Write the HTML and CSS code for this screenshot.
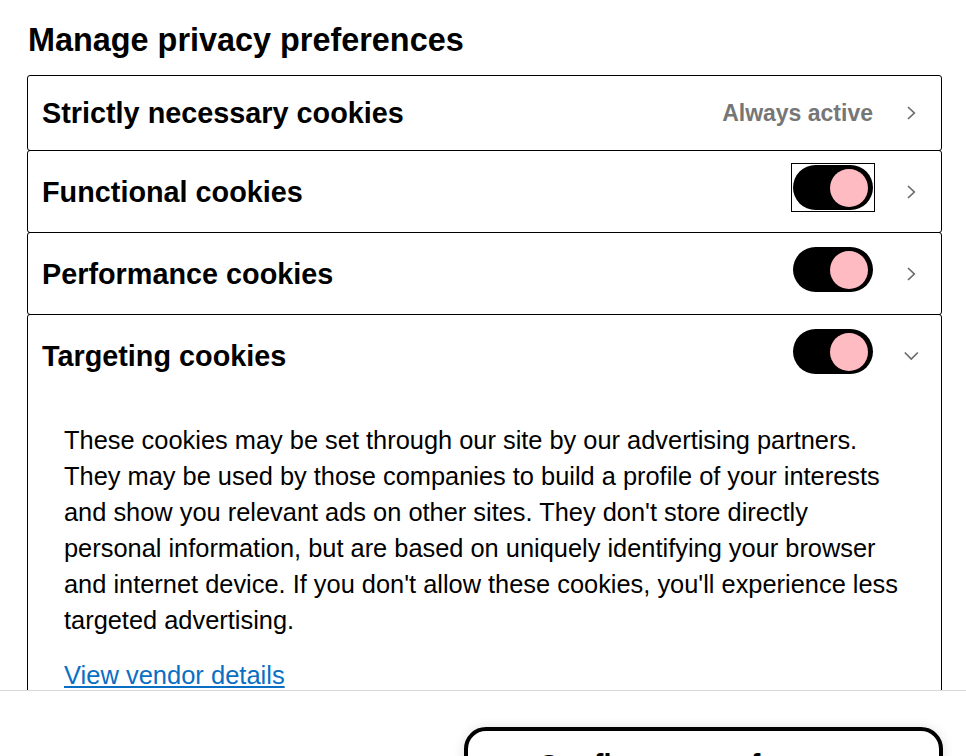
FILE: index.html
```html
<!DOCTYPE html>
<html lang="en">
<head>
<meta charset="utf-8">
<title>Manage privacy preferences</title>
<link rel="stylesheet" href="styles.css">
</head>
<body>
<div class="panel">
  <div class="scroll">
    <h1 class="title">Manage privacy preferences</h1>
    <div class="list">
      <div class="row">
        <div class="row-head static">
          <span class="row-title">Strictly necessary cookies</span>
          <span class="always">Always active</span>
          <span class="chev"><svg width="16" height="16" viewBox="0 0 16 16"><path d="M5 2 L11.3 8 L5 14" fill="none" stroke="#6b6b6b" stroke-width="1.7"/></svg></span>
        </div>
      </div>
      <div class="row">
        <div class="row-head">
          <span class="row-title">Functional cookies</span>
          <span class="switch focused"><span class="track"><span class="knob"></span></span></span>
          <span class="chev"><svg width="16" height="16" viewBox="0 0 16 16"><path d="M5 2 L11.3 8 L5 14" fill="none" stroke="#6b6b6b" stroke-width="1.7"/></svg></span>
        </div>
      </div>
      <div class="row">
        <div class="row-head">
          <span class="row-title">Performance cookies</span>
          <span class="switch"><span class="track"><span class="knob"></span></span></span>
          <span class="chev"><svg width="16" height="16" viewBox="0 0 16 16"><path d="M5 2 L11.3 8 L5 14" fill="none" stroke="#6b6b6b" stroke-width="1.7"/></svg></span>
        </div>
      </div>
      <div class="row open">
        <div class="row-head">
          <span class="row-title">Targeting cookies</span>
          <span class="switch"><span class="track"><span class="knob"></span></span></span>
          <span class="chev"><svg width="16" height="16" viewBox="0 0 16 16"><path d="M1.8 4.5 L8.3 11 L14.8 4.5" fill="none" stroke="#6b6b6b" stroke-width="1.7"/></svg></span>
        </div>
        <div class="row-body">
          <p class="desc">These cookies may be set through our site by our advertising partners. They may be used by those companies to build a profile of your interests and show you relevant ads on other sites. They don't store directly personal information, but are based on uniquely identifying your browser and internet device. If you don't allow these cookies, you'll experience less targeted advertising.</p>
          <a class="vendor-link" href="#">View vendor details</a>
          <div class="spacer"></div>
        </div>
      </div>
    </div>
  </div>
  <div class="footer">
    <button class="confirm" type="button">Confirm my preferences</button>
  </div>
</div>
</body>
</html>
```

FILE: styles.css
```css
html, body {
  margin: 0;
  padding: 0;
  background: #ffffff;
}

body {
  font-family: "Liberation Sans", Arial, Helvetica, sans-serif;
  color: #000000;
  overflow: hidden;
}

.panel {
  width: 966px;
  height: 756px;
  display: flex;
  flex-direction: column;
}

.scroll {
  height: 690px;
  flex: none;
  overflow: hidden;
  padding: 0 24px 0 27px;
  box-sizing: border-box;
}

.title {
  margin: 20px 0 15px 1px;
  font-size: 32.4px;
  line-height: 40px;
  font-weight: 700;
}

.list {
  display: flex;
  flex-direction: column;
}

.row {
  border: 1px solid #000000;
  border-radius: 3px;
}

.row + .row {
  margin-top: -1px;
}

.row-head {
  display: flex;
  align-items: center;
  height: 81px;
  padding: 0 14px;
}

.row-head.static {
  height: 74px;
}

.row-title {
  flex: 1;
  font-size: 28.8px;
  font-weight: 700;
  line-height: 36px;
}

.always {
  font-size: 23px;
  font-weight: 700;
  color: #767676;
  margin-right: 1px;
}

.chev {
  width: 32px;
  margin-left: 21px;
  display: flex;
  justify-content: center;
  align-items: center;
}

.chev svg {
  display: block;
}

.switch {
  display: block;
  padding: 1px;
  margin-bottom: 8px;
}

.switch.focused {
  outline: 1px solid #000000;
}

.track {
  display: block;
  position: relative;
  width: 80px;
  height: 45px;
  border-radius: 23px;
  background: #000000;
}

.knob {
  position: absolute;
  top: 4px;
  right: 5px;
  width: 38px;
  height: 38px;
  border-radius: 50%;
  background: #ffbbc2;
}

.row-body {
  padding: 26px 30px 0 36px;
}

.desc {
  margin: 0 0 19px 0;
  font-size: 25.4px;
  line-height: 36px;
}

.vendor-link {
  font-size: 25.5px;
  line-height: 36px;
  color: #0a6fc2;
  text-decoration: underline;
}

.spacer {
  height: 60px;
}

.footer {
  flex: 1;
  border-top: 1px solid #d9d9d9;
  display: flex;
  justify-content: flex-end;
  align-items: flex-start;
  padding: 36px 23px 0 0;
}

.confirm {
  width: 479px;
  height: 80px;
  flex: none;
  border: 4px solid #000000;
  border-radius: 22px;
  background: #ffffff;
  box-shadow: 0 0 12px rgba(0, 0, 0, 0.12);
  font-family: "Liberation Sans", Arial, Helvetica, sans-serif;
  font-size: 28.8px;
  font-weight: 700;
  line-height: 36px;
  color: #000000;
  padding: 16px 10px 0 10px;
  display: flex;
  justify-content: center;
  align-items: flex-start;
}
```
